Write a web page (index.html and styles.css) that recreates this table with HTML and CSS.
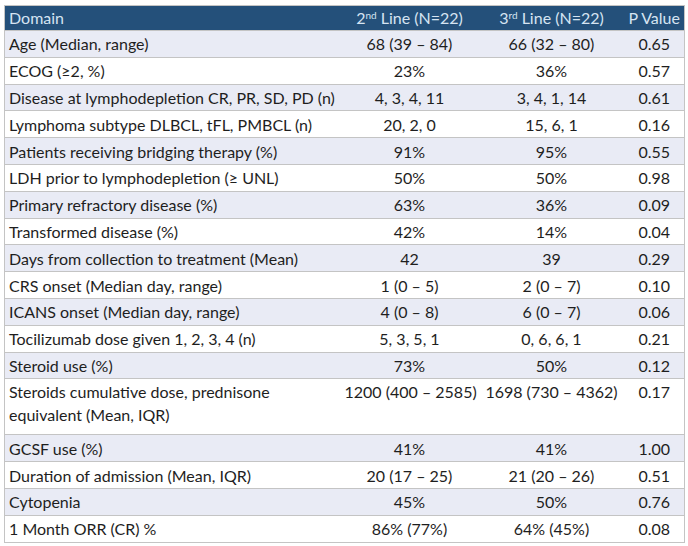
FILE: index.html
```html
<!DOCTYPE html>
<html>
<head>
<meta charset="utf-8">
<link rel="stylesheet" href="styles.css">
</head>
<body>
<table class="data">
  <colgroup>
    <col class="c1"><col class="c2"><col class="c3"><col class="c4">
  </colgroup>
  <thead>
    <tr><th class="left">Domain</th><th>2<sup>nd</sup> Line (N=22)</th><th>3<sup>rd</sup> Line (N=22)</th><th>P Value</th></tr>
  </thead>
  <tbody>
    <tr><td>Age (Median, range)</td><td>68 (39 – 84)</td><td>66 (32 – 80)</td><td>0.65</td></tr>
    <tr><td>ECOG (≥2, %)</td><td>23%</td><td>36%</td><td>0.57</td></tr>
    <tr><td>Disease at lymphodepletion CR, PR, SD, PD (n)</td><td>4, 3, 4, 11</td><td>3, 4, 1, 14</td><td>0.61</td></tr>
    <tr><td>Lymphoma subtype DLBCL, tFL, PMBCL (n)</td><td>20, 2, 0</td><td>15, 6, 1</td><td>0.16</td></tr>
    <tr><td>Patients receiving bridging therapy (%)</td><td>91%</td><td>95%</td><td>0.55</td></tr>
    <tr><td>LDH prior to lymphodepletion (≥ UNL)</td><td>50%</td><td>50%</td><td>0.98</td></tr>
    <tr><td>Primary refractory disease (%)</td><td>63%</td><td>36%</td><td>0.09</td></tr>
    <tr><td>Transformed disease (%)</td><td>42%</td><td>14%</td><td>0.04</td></tr>
    <tr><td>Days from collection to treatment (Mean)</td><td>42</td><td>39</td><td>0.29</td></tr>
    <tr><td>CRS onset (Median day, range)</td><td>1 (0 – 5)</td><td>2 (0 – 7)</td><td>0.10</td></tr>
    <tr><td>ICANS onset (Median day, range)</td><td>4 (0 – 8)</td><td>6 (0 – 7)</td><td>0.06</td></tr>
    <tr><td>Tocilizumab dose given 1, 2, 3, 4 (n)</td><td>5, 3, 5, 1</td><td>0, 6, 6, 1</td><td>0.21</td></tr>
    <tr><td>Steroid use (%)</td><td>73%</td><td>50%</td><td>0.12</td></tr>
    <tr class="tall"><td>Steroids cumulative dose, prednisone equivalent (Mean, IQR)</td><td>1200 (400 – 2585)</td><td>1698 (730 – 4362)</td><td>0.17</td></tr>
    <tr><td>GCSF use (%)</td><td>41%</td><td>41%</td><td>1.00</td></tr>
    <tr><td>Duration of admission (Mean, IQR)</td><td>20 (17 – 25)</td><td>21 (20 – 26)</td><td>0.51</td></tr>
    <tr><td>Cytopenia</td><td>45%</td><td>50%</td><td>0.76</td></tr>
    <tr><td>1 Month ORR (CR) %</td><td>86% (77%)</td><td>64% (45%)</td><td>0.08</td></tr>
  </tbody>
</table>
</body>
</html>
```
FILE: styles.css
```css
html, body {
  margin: 0;
  padding: 0;
  background: #ffffff;
}
body {
  padding: 5px 4px 0 4px;
  font-family: "Lato", "Open Sans", sans-serif;
  font-size: 16px;
  color: #1e1e1e;
}
.data {
  width: 680px;
  border-collapse: collapse;
  border: 1px solid #c4c4c4;
  table-layout: fixed;
}
.c1 { width: 336px; }
.c2 { width: 138px; }
.c3 { width: 146px; }
.c4 { width: 60px; }
.data th {
  background: #24507a;
  color: #d6e4f2;
  font-weight: normal;
  height: 24px;
  padding: 0 4px;
  text-align: center;
  line-height: 24px;
  white-space: nowrap;
}
.data th.left { text-align: left; }
.data th sup {
  font-size: 10px;
  line-height: 0;
  vertical-align: 5px;
}
.data td {
  height: 25.8px;
  padding: 0 4px;
  line-height: 23px;
  border-top: 1px solid #c4c4c4;
  text-align: center;
  vertical-align: middle;
  white-space: nowrap;
}
.data td:first-child {
  text-align: left;
  white-space: normal;
}
.data tbody tr:nth-child(odd) td { background: #e9ebf5; }
.data tbody tr:nth-child(even) td { background: #ffffff; }
.data tr.tall td {
  height: 54px;
  padding-top: 1px;
  vertical-align: top;
}
```
